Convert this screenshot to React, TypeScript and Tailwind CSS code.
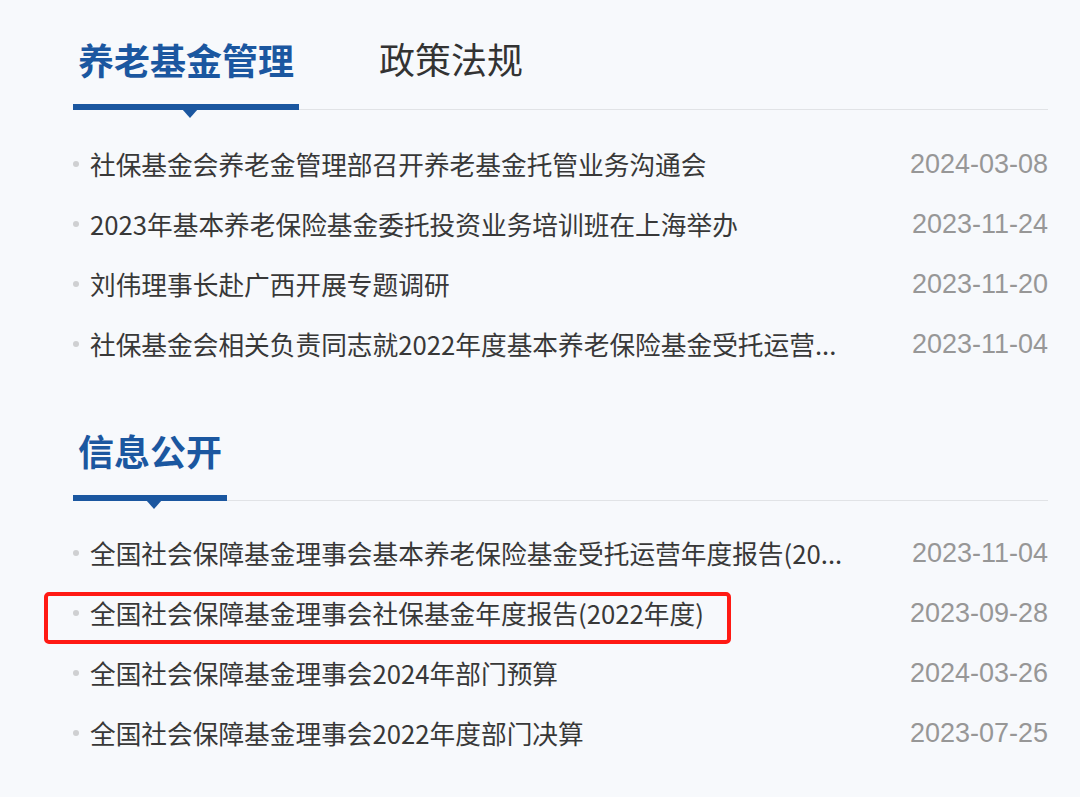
import React from "react";

type NewsItem = {
  title: string;
  date: string;
  marked?: boolean;
};

const fundNews: NewsItem[] = [
  { title: "社保基金会养老金管理部召开养老基金托管业务沟通会", date: "2024-03-08" },
  { title: "2023年基本养老保险基金委托投资业务培训班在上海举办", date: "2023-11-24" },
  { title: "刘伟理事长赴广西开展专题调研", date: "2023-11-20" },
  { title: "社保基金会相关负责同志就2022年度基本养老保险基金受托运营...", date: "2023-11-04" },
];

const disclosure: NewsItem[] = [
  { title: "全国社会保障基金理事会基本养老保险基金受托运营年度报告(20...", date: "2023-11-04" },
  { title: "全国社会保障基金理事会社保基金年度报告(2022年度)", date: "2023-09-28", marked: true },
  { title: "全国社会保障基金理事会2024年部门预算", date: "2024-03-26" },
  { title: "全国社会保障基金理事会2022年度部门决算", date: "2023-07-25" },
];

function ActiveTab({ label }: { label: string }) {
  return (
    <div className="relative -mb-px border-b-[6px] border-[#1b57a0] pl-[5px] pr-[5px] pb-[21px]">
      <span className="block text-[36px] font-bold leading-[48px] text-[#1b57a0]">{label}</span>
      <span className="absolute left-1/2 top-[calc(100%+5px)] ml-[4px] h-0 w-0 -translate-x-1/2 border-x-[8px] border-t-[9px] border-x-transparent border-t-[#1b57a0]" />
    </div>
  );
}

function NewsList({ items, className }: { items: NewsItem[]; className: string }) {
  return (
    <ul className={className}>
      {items.map((item) => (
        <li key={item.title} className="relative flex h-[60px] items-center">
          <span className="size-[6px] shrink-0 rounded-full bg-[#cfd0d2]" />
          <span className="ml-[11px] flex-1 whitespace-nowrap text-[25.7px] leading-none text-[#383838]">
            {item.title}
          </span>
          <span className="text-[27px] leading-none text-[#979797] [font-family:'Liberation_Sans',Arial,sans-serif]">
            {item.date}
          </span>
          {item.marked && (
            <span className="absolute left-[-29px] top-[9px] h-[52px] w-[687px] rounded-[5px] border-[4px] border-[#ff1a14]" />
          )}
        </li>
      ))}
    </ul>
  );
}

export default function App() {
  return (
    <div className="min-h-[797px] w-[1080px] bg-[#f7f9fc] pl-[73px] pr-[32px] [font-family:'Noto_Sans_CJK_SC','Noto_Sans',sans-serif]">
      <section className="pt-[34px]">
        <div className="flex items-end border-b border-[#e1e3e6]">
          <ActiveTab label="养老基金管理" />
          <div className="ml-[75px] px-[5px] pb-[27px]">
            <span className="block text-[36px] leading-[48px] text-[#333333]">政策法规</span>
          </div>
        </div>
        <NewsList items={fundNews} className="mt-[24px]" />
      </section>

      <section className="pt-[52px]">
        <div className="flex items-end border-b border-[#e1e3e6]">
          <ActiveTab label="信息公开" />
        </div>
        <NewsList items={disclosure} className="mt-[22px]" />
      </section>
    </div>
  );
}
